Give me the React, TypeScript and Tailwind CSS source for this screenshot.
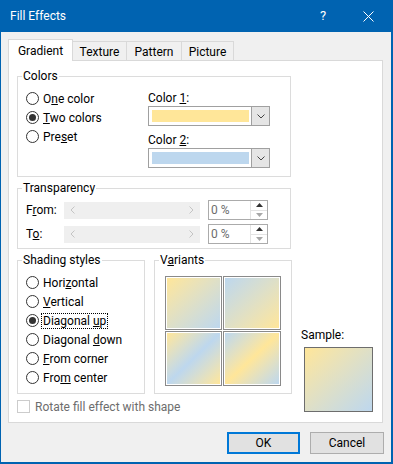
import React from "react";

const Y = "#ffe699";
const B = "#bdd7ee";

function Radio({ checked }: { checked?: boolean }) {
  return (
    <span className="w-[13px] h-[13px] rounded-full border border-[#333333] bg-white flex items-center justify-center shrink-0">
      {checked && <span className="w-[7px] h-[7px] rounded-full bg-[#333333]" />}
    </span>
  );
}

function RadioRow({ checked, children, focus }: { checked?: boolean; children: React.ReactNode; focus?: boolean }) {
  return (
    <div className="h-[19px] flex items-center gap-[4px]">
      <Radio checked={checked} />
      <span className={focus ? "outline outline-1 outline-dotted outline-black px-[1px] -ml-[1px] leading-[14px]" : ""}>{children}</span>
    </div>
  );
}

function Group({ title, className, children }: { title: React.ReactNode; className: string; children?: React.ReactNode }) {
  return (
    <div className={"relative border border-[#dcdcdc] shrink-0 " + className}>
      <span className="absolute left-[4px] top-[-9px] bg-white px-[1px] leading-[16px]">{title}</span>
      {children}
    </div>
  );
}

function Chevron() {
  return (
    <svg width="8" height="5" viewBox="0 0 8 5">
      <path d="M0.5 0.5 L4 4 L7.5 0.5" fill="none" stroke="#444444" strokeWidth="1" />
    </svg>
  );
}

function Dropdown({ color }: { color: string }) {
  return (
    <div className="w-[122px] h-[20px] border border-[#a0a0a0] bg-white flex">
      <div className="flex-1 pl-[3px] pr-[2px] py-[3px] flex">
        <div className="flex-1" style={{ backgroundColor: color }} />
      </div>
      <div className="w-[18px] border-l border-[#a0a0a0] bg-[#e5e5e5] flex items-center justify-center">
        <Chevron />
      </div>
    </div>
  );
}

function Slider() {
  return (
    <div className="w-[136px] h-[17px] bg-[#efefef] flex items-center justify-between px-[6px]">
      <svg width="5" height="8" viewBox="0 0 5 8">
        <path d="M4.5 0.5 L1 4 L4.5 7.5" fill="none" stroke="#c4c4c4" strokeWidth="1" />
      </svg>
      <svg width="5" height="8" viewBox="0 0 5 8">
        <path d="M0.5 0.5 L4 4 L0.5 7.5" fill="none" stroke="#c4c4c4" strokeWidth="1" />
      </svg>
    </div>
  );
}

function Spin() {
  return (
    <div className="w-[60px] h-[20px] border border-[#ababab] bg-white flex">
      <span className="flex-1 pl-[2px] text-[#6d6d6d] leading-[18px]">0 %</span>
      <div className="w-[17px] flex flex-col border-l border-[#e3e3e3]">
        <div className="flex-1 flex items-center justify-center border-b border-[#e3e3e3]">
          <svg width="7" height="4" viewBox="0 0 7 4">
            <path d="M0 4 L3.5 0 L7 4 Z" fill="#333333" />
          </svg>
        </div>
        <div className="flex-1 flex items-center justify-center">
          <svg width="7" height="4" viewBox="0 0 7 4">
            <path d="M0 0 L3.5 4 L7 0 Z" fill="#a8a8a8" />
          </svg>
        </div>
      </div>
    </div>
  );
}

function Tile({ cls }: { cls: string }) {
  return (
    <div className="border border-[#8a8a8a] p-[1px] bg-white flex">
      <div className={"flex-1 " + cls} />
    </div>
  );
}

export default function App() {
  return (
    <div className="w-[393px] h-[464px] border-l border-r-2 border-b-2 border-[#0063b1] flex flex-col font-['Roboto',sans-serif] text-[12px] leading-[16px] text-black">
      <div className="h-[32px] shrink-0 bg-[#0063b1] flex items-center text-white pl-[9px]">
        <span className="text-[12px]">Fill Effects</span>
        <span className="ml-auto w-[8px] text-center text-[13px]">?</span>
        <svg className="ml-[36px] mr-[17px]" width="11" height="11" viewBox="0 0 11 11">
          <path d="M0.5 0.5 L10.5 10.5 M10.5 0.5 L0.5 10.5" stroke="white" strokeWidth="1" />
        </svg>
      </div>
      <div className="flex-1 bg-[#f0f0f0] pt-[7px] pl-[7px] flex flex-col">
        <div className="flex items-end h-[21px]">
          <div className="w-[65px] h-[22px] -mb-[1px] relative z-10 bg-white border-l border-t border-r border-[#d9d9d9] text-center pt-[3px]">
            Gradient
          </div>
          <div className="w-[54px] h-[19px] border-t border-r border-[#d9d9d9] text-center pt-[2px]">Texture</div>
          <div className="w-[55px] h-[19px] border-t border-r border-[#d9d9d9] text-center pt-[2px]">Pattern</div>
          <div className="w-[52px] h-[19px] border-t border-r border-[#d9d9d9] text-center pt-[2px]">Picture</div>
        </div>
        <div className="w-[375px] h-[363px] border border-[#d9d9d9] bg-white pl-[8px] pt-[15px] flex flex-col">
          <Group title="Colors" className="w-[274px] h-[101px] flex">
            <div className="w-[130px] pl-[8px] pt-[12px] flex flex-col">
              <RadioRow>
                O<u>n</u>e color
              </RadioRow>
              <RadioRow checked>
                <u>T</u>wo colors
              </RadioRow>
              <RadioRow>
                Pre<u>s</u>et
              </RadioRow>
            </div>
            <div className="pt-[13px] flex flex-col">
              <span>
                Color <u>1</u>:
              </span>
              <Dropdown color={Y} />
              <span className="mt-[6px]">
                Color <u>2</u>:
              </span>
              <Dropdown color={B} />
            </div>
          </Group>
          <Group title="Transparency" className="w-[274px] h-[61px] mt-[11px] pt-[11px] pl-[8px] flex flex-col">
            <div className="h-[20px] flex items-center">
              <span className="w-[38px]">
                F<u>r</u>om:
              </span>
              <Slider />
              <div className="ml-[8px]">
                <Spin />
              </div>
            </div>
            <div className="h-[20px] mt-[4px] flex items-center">
              <span className="w-[38px]">
                T<u>o</u>:
              </span>
              <Slider />
              <div className="ml-[8px]">
                <Spin />
              </div>
            </div>
          </Group>
          <div className="mt-[11px] flex">
            <div className="flex flex-col">
              <div className="flex">
                <Group title="Shading styles" className="w-[128px] h-[134px] pl-[8px] pt-[12px] flex flex-col">
                  <RadioRow>
                    Hori<u>z</u>ontal
                  </RadioRow>
                  <RadioRow>
                    <u>V</u>ertical
                  </RadioRow>
                  <RadioRow checked focus>
                    Diagonal <u>u</u>p
                  </RadioRow>
                  <RadioRow>
                    Diagonal <u>d</u>own
                  </RadioRow>
                  <RadioRow>
                    <u>F</u>rom corner
                  </RadioRow>
                  <RadioRow>
                    Fro<u>m</u> center
                  </RadioRow>
                </Group>
                <Group
                  title={
                    <>
                      V<u>a</u>riants
                    </>
                  }
                  className="ml-[9px] w-[138px] h-[134px] pl-[10px] pt-[15px]"
                >
                  <div className="grid grid-cols-[57px_58px] grid-rows-[54px_55px] gap-[1px]">
                    <Tile cls="bg-linear-to-br from-[#ffe699] to-[#bdd7ee]" />
                    <Tile cls="bg-linear-to-br from-[#bdd7ee] to-[#ffe699]" />
                    <Tile cls="bg-linear-to-br from-[#ffe699] via-[#bdd7ee] to-[#ffe699]" />
                    <Tile cls="bg-linear-to-br from-[#bdd7ee] via-[#ffe699] to-[#bdd7ee]" />
                  </div>
                </Group>
              </div>
              <div className="mt-[6px] flex items-center gap-[5px] h-[13px]">
                <span className="w-[13px] h-[13px] border border-[#cccccc] bg-white" />
                <span className="text-[#6d6d6d]">Rotate fill effect with shape</span>
              </div>
            </div>
            <div className="ml-[9px] flex flex-col justify-end">
              <span>Sample:</span>
              <div className="ml-[3px] mt-[4px] mb-[1px] w-[69px] h-[65px] border border-[#6d6d6d] bg-linear-to-br from-[#ffe699] to-[#bdd7ee]" />
            </div>
          </div>
        </div>
        <div className="mt-[9px] pr-[7px] flex justify-end gap-[10px]">
          <button className="w-[73px] h-[22px] border-2 border-[#0078d7] bg-[#e1e1e1] leading-[16px]">OK</button>
          <button className="w-[74px] h-[22px] border border-[#adadad] bg-[#e1e1e1] leading-[16px]">Cancel</button>
        </div>
      </div>
    </div>
  );
}
